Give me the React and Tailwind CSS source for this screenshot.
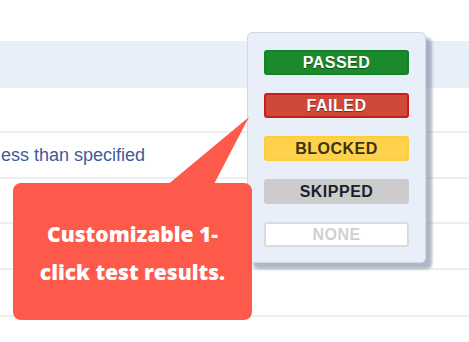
import React from "react";

const results = [
  { label: "PASSED", cls: "bg-[#1b8a2c] border-[#15802a] text-white [text-shadow:0_1px_1px_rgba(0,0,0,0.45)]" },
  { label: "FAILED", cls: "bg-[#d04839] border-[#c81e17] text-white [text-shadow:0_1px_1px_rgba(0,0,0,0.45)]" },
  { label: "BLOCKED", cls: "bg-[#ffd24c] border-[#ffcc3a] text-[#3b3210]" },
  { label: "SKIPPED", cls: "bg-[#cccccc] border-[#cccccc] text-[#1d1f2a]" },
  { label: "NONE", cls: "bg-white border-[#d9dbe0] text-[#cfd0d3]" },
];

const App = () => {
  return (
    <div className="relative w-[469px] h-[342px] overflow-hidden bg-white font-['Liberation_Sans',Arial,sans-serif]">
      {/* table behind */}
      <div className="flex flex-col">
        <div className="h-[41px]" />
        <div className="h-[47px] bg-[#e9eff9]" />
        <div className="h-[45px] border-b-2 border-[#eeeeee]" />
        <div className="h-[46px] border-b-2 border-[#eeeeee] flex items-center text-[18px] text-[#3d5d9c] pl-[1px]">
          ess than specified
        </div>
        <div className="h-[45px] border-b-2 border-[#eeeeee]" />
        <div className="h-[46px] border-b-2 border-[#eeeeee]" />
        <div className="h-[47px] border-b-2 border-[#eeeeee]" />
      </div>

      {/* result picker */}
      <div className="absolute left-[247px] top-[32px] w-[179px] h-[231px] rounded-[5px] bg-[#e9eff9] border border-[#d3d9e3] shadow-[6px_6px_3px_rgba(125,135,160,0.6)] flex flex-col items-center pt-[17px] gap-[18px]">
        {results.map((r) => (
          <div
            key={r.label}
            className={`w-[145px] h-[25px] rounded-[3px] border-2 flex items-center justify-center text-[16px] font-bold tracking-[0.5px] ${r.cls}`}
          >
            {r.label}
          </div>
        ))}
      </div>

      {/* callout */}
      <svg className="absolute left-0 top-0" width="469" height="342">
        <polygon points="166,186 213,186 249,117" fill="#fe5a4c" />
      </svg>
      <div className="absolute left-[13px] top-[183px] w-[239px] h-[137px] rounded-[8px] bg-[#fe5a4c] flex flex-col items-center justify-center text-white font-['Open_Sans',sans-serif] font-extrabold text-[21px] leading-[38px] pt-[2px]">
        <span>Customizable 1-</span>
        <span>click test results.</span>
      </div>
    </div>
  );
};

export default App;
